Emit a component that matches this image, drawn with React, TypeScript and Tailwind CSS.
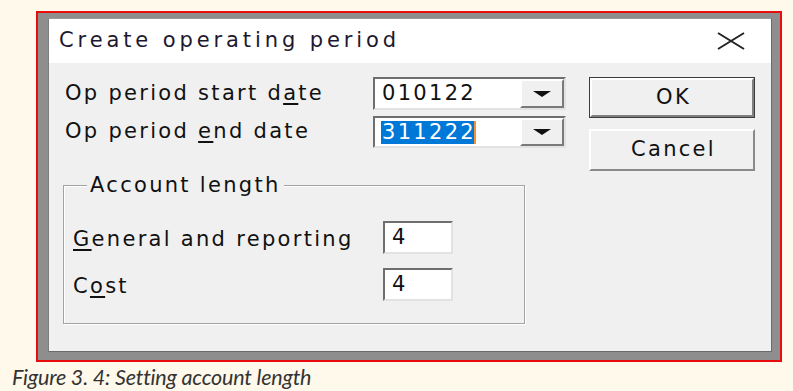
const ui = "font-['DejaVu_Sans',Verdana,sans-serif] text-[21px] tracking-[2.3px] text-[#111]"

function Sunken({ className = '', children }: { className?: string; children?: React.ReactNode }) {
  return (
    <div className={`bg-white border-2 border-t-[#6e6e6e] border-l-[#6e6e6e] border-r-[#e2e2e2] border-b-[#e2e2e2] ${className}`}>
      {children}
    </div>
  )
}

function Combo({ value, selected }: { value: string; selected?: boolean }) {
  return (
    <Sunken className="w-[193px] h-full flex items-stretch">
      <div className="flex-1 flex items-center pl-[6px]">
        {selected ? (
          <span className="flex items-center">
            <span className="bg-[#0078d7] text-white leading-[23px] pl-[1px]">{value}</span>
            <span className="w-[2px] h-[23px] bg-[#f59038] -ml-[2px]" />
          </span>
        ) : (
          <span className="leading-[23px] pl-[1px]">{value}</span>
        )}
      </div>
      <div className="w-[44px] bg-[#f0f0f0] border-2 border-t-white border-l-white border-r-[#7a7a7a] border-b-[#7a7a7a] flex items-center justify-center">
        <svg width="18" height="6" viewBox="0 0 18 6">
          <polygon points="0,0 18,0 9,6" fill="#111" />
        </svg>
      </div>
    </Sunken>
  )
}

export default function App() {
  return (
    <div className="w-[793px] h-[391px] bg-[#fef9eb] pt-[11px] overflow-hidden">
      {/* dialog */}
      <div className="ml-[36px] w-[746px] h-[351px] border-2 border-[#e80c0c]">
        <div className="h-full bg-[#8e8e8e] pl-[10px] pt-[5px] pr-[8px] pb-[8px]">
          <div className="h-full flex flex-col border border-[#6a6a6a] border-l-[#7d7d7d] border-t-[#9a9a9a]">
            {/* title bar */}
            <div className="h-[44px] bg-white flex items-center justify-between pl-[10px] pr-[26px]">
              <span className="font-['DejaVu_Sans',Verdana,sans-serif] text-[21px] tracking-[3.9px] text-[#1d1830]">
                Create operating period
              </span>
              <svg width="28" height="18" viewBox="0 0 28 18">
                <path d="M1 1 L27 17 M27 1 L1 17" stroke="#222" strokeWidth="2" />
              </svg>
            </div>

            {/* body */}
            <div className={`flex-1 bg-[#f0f0f0] flex pl-[14px] pt-[14px] ${ui}`}>
              <div className="w-[503px] flex flex-col">
                <div className="h-[33px] flex items-center">
                  <div className="w-[310px] pl-[2px]">
                    Op period start d<span className="underline underline-offset-[3px]">a</span>te
                  </div>
                  <Combo value="010122" />
                </div>
                <div className="h-[32px] mt-[6px] flex items-center">
                  <div className="w-[310px] pl-[2px]">
                    Op period <span className="underline underline-offset-[3px]">e</span>nd date
                  </div>
                  <Combo value="311222" selected />
                </div>

                {/* group box */}
                <div className="relative mt-[37px] w-[462px] h-[139px] border border-[#a3a3a3] shadow-[inset_1px_1px_0_#ffffff,1px_1px_0_#ffffff]">
                  <div className="absolute left-[23px] -top-[13px] bg-[#f0f0f0] px-[3px] leading-[24px]">
                    Account length
                  </div>
                  <div className="pl-[9px] pt-[35px] flex flex-col">
                    <div className="h-[33px] flex items-center">
                      <div className="w-[310px] pt-[5px]">
                        <span className="underline underline-offset-[3px]">G</span>eneral and reporting
                      </div>
                      <Sunken className="w-[70px] h-full flex items-center pl-[7px]">4</Sunken>
                    </div>
                    <div className="h-[33px] mt-[14px] flex items-center">
                      <div className="w-[310px] pt-[5px]">
                        C<span className="underline underline-offset-[3px]">o</span>st
                      </div>
                      <Sunken className="w-[70px] h-full flex items-center pl-[7px]">4</Sunken>
                    </div>
                  </div>
                </div>
              </div>

              {/* buttons */}
              <div className="ml-[23px] flex flex-col">
                <button className="w-[166px] h-[41px] border border-[#3c3c3c] bg-[#f0f0f0]">
                  <div className="h-full border-2 border-t-white border-l-white border-r-[#808080] border-b-[#808080] flex items-center justify-center pl-[3px]">
                    OK
                  </div>
                </button>
                <button className="mt-[11px] w-[166px] h-[42px] bg-[#f0f0f0] border-2 border-t-white border-l-white border-r-[#8a8a8a] border-b-[#8a8a8a] flex items-center justify-center pl-[3px]">
                  Cancel
                </button>
              </div>
            </div>
          </div>
        </div>
      </div>

      {/* caption */}
      <p className="mt-[2px] pl-[12px] font-['Lato',sans-serif] italic text-[21.5px] leading-[26px] text-[#333] tracking-[-0.2px]">
        Figure 3. 4: Setting account length
      </p>
    </div>
  )
}
